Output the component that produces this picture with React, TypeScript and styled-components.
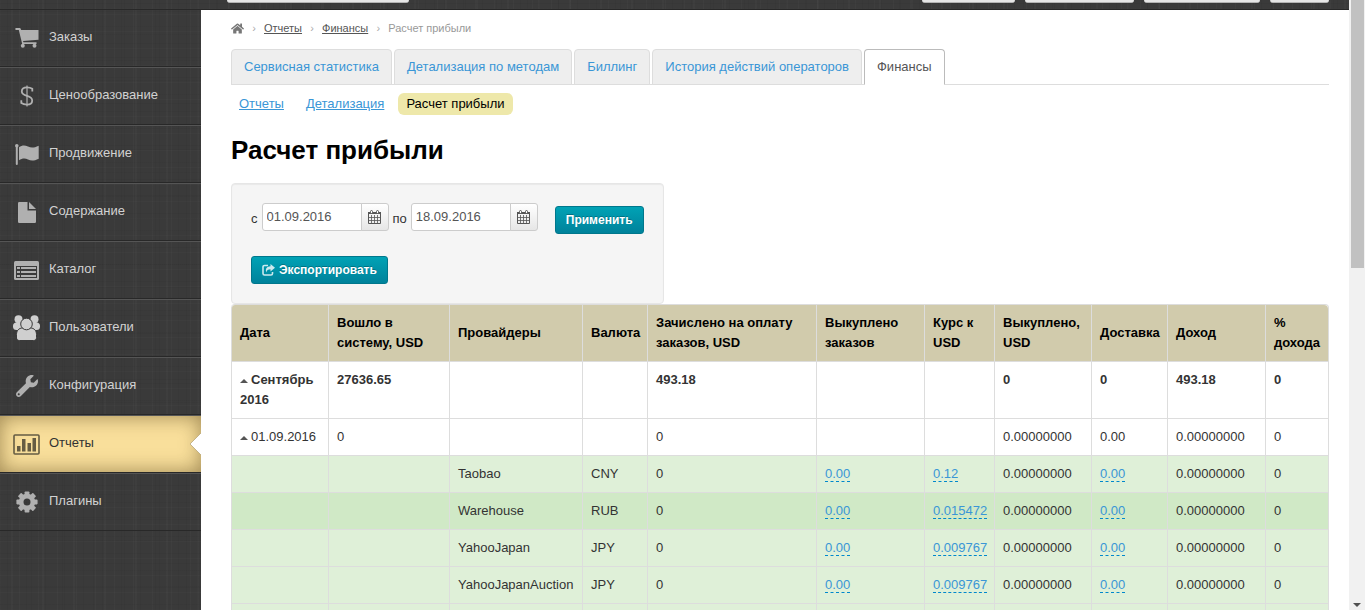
import React from 'react';
import styled, { createGlobalStyle, css } from 'styled-components';
import { FaWrench, FaHome } from 'react-icons/fa';

const GlobalStyle = createGlobalStyle`
  *, *::before, *::after { box-sizing: border-box; }
  body {
    margin: 0;
    background: #fff;
    color: #333;
    font: 13px/20px "Liberation Sans", Arial, sans-serif;
  }
  button, input { font: inherit; }
  a { color: #3a96d6; }
`;

const linen = css`
  background-color: #3a3a3a;
  background-image:
    repeating-linear-gradient(90deg, rgba(255, 255, 255, 0.02) 0 1px, transparent 1px 7px, rgba(0, 0, 0, 0.04) 7px 8px, transparent 8px 19px),
    repeating-linear-gradient(90deg, rgba(0, 0, 0, 0.04) 0 1px, transparent 1px 11px, rgba(255, 255, 255, 0.02) 11px 13px, transparent 13px 31px),
    repeating-linear-gradient(0deg, rgba(255, 255, 255, 0.015) 0 1px, transparent 1px 5px, rgba(0, 0, 0, 0.03) 5px 6px, transparent 6px 17px),
    repeating-linear-gradient(0deg, rgba(0, 0, 0, 0.03) 0 1px, transparent 1px 23px);
`;

const Shell = styled.div`
  display: flex;
  height: 100vh;
  overflow: hidden;
`;

const Page = styled.div`
  flex: 1;
  min-width: 0;
  display: flex;
  flex-direction: column;
`;

const TopBar = styled.header`
  ${linen}
  flex: none;
  display: flex;
  align-items: flex-start;
  gap: 10px;
  height: 10px;
  padding: 0 20px 0 227px;
  border-bottom: 1px solid #282828;
`;

const TopButton = styled.button<{ $width: number; $push?: boolean }>`
  width: ${p => p.$width}px;
  height: 3px;
  padding: 0;
  margin-right: ${p => (p.$push ? 'auto' : '0')};
  border: 0;
  border-bottom: 1px solid #b3b3b3;
  border-radius: 0 0 3px 3px;
  background: #e6e6e6;
`;

const Body = styled.div`
  flex: 1;
  min-height: 0;
  display: flex;
`;

const Sidebar = styled.nav`
  ${linen}
  flex: none;
  width: 201px;
`;

const Menu = styled.ul`
  margin: 0;
  padding: 0;
  list-style: none;
`;

const MenuItem = styled.li`
  position: relative;
  border-top: 1px solid #555;
  border-bottom: 1px solid #282828;
  &:first-child { border-top: 0; }
`;

const MenuLink = styled.a<{ $active?: boolean }>`
  display: flex;
  align-items: center;
  gap: 9px;
  height: 56px;
  padding: 0 13px;
  color: ${p => (p.$active ? '#333' : '#d2d2d2')};
  text-decoration: none;
  ${p => p.$active && css`
    background: #f9df9b;
    box-shadow: inset 0 0 20px rgba(80, 60, 20, 0.55);
  `}
`;

const MenuIcon = styled.span<{ $active?: boolean }>`
  display: flex;
  align-items: center;
  justify-content: center;
  width: 27px;
  height: 28px;
  color: ${p => (p.$active ? '#655c43' : '#b0b0b0')};
`;

const MenuLabel = styled.span`
  padding-bottom: 2px;
`;

const Notch = styled.svg`
  position: absolute;
  right: 0;
  top: 17px;
`;

const Content = styled.main`
  flex: 1;
  min-width: 0;
  overflow: hidden;
  padding: 8px 20px 0 30px;
`;

const Crumbs = styled.nav`
  display: flex;
  align-items: center;
  height: 20px;
  font-size: 11px;
  color: #999;
  a { color: #555; }
`;

const HomeLink = styled.a`
  display: flex;
  && { color: #777; }
`;

const Separator = styled.span`
  width: 20px;
  text-align: center;
  color: #aaa;
`;

const Tabs = styled.nav`
  display: flex;
  gap: 2px;
  margin-top: 11px;
  border-bottom: 1px solid #ddd;
`;

const Tab = styled.a<{ $active?: boolean }>`
  margin-bottom: -1px;
  padding: 7px 12px;
  border: 1px solid #ddd;
  border-radius: 4px 4px 0 0;
  background: #eee;
  text-decoration: none;
  white-space: nowrap;
  ${p => p.$active && css`
    color: #555;
    background: #fff;
    border-color: #bbb #bbb #fff;
  `}
`;

const Pills = styled.nav`
  display: flex;
  gap: 6px;
  margin-top: 8px;
`;

const Pill = styled.a<{ $active?: boolean }>`
  padding: 1px 8px;
  border-radius: 6px;
  ${p => p.$active && css`
    color: #000;
    background: #eee8aa;
    text-decoration: none;
  `}
`;

const Title = styled.h1`
  margin: 15px 0 13px;
  font-size: 26px;
  line-height: 40px;
  color: #000;
`;

const Filter = styled.form`
  display: flex;
  flex-direction: column;
  align-items: flex-start;
  gap: 22px;
  width: fit-content;
  padding: 19px;
  border: 1px solid #e6e6e6;
  border-radius: 4px;
  background: #f5f5f5;
  box-shadow: inset 0 1px 1px rgba(0, 0, 0, 0.05);
`;

const FilterRow = styled.div`
  display: flex;
  align-items: flex-start;
  gap: 4px;
  height: 31px;
`;

const FieldLabel = styled.label`
  padding-top: 6px;
`;

const DateGroup = styled.div`
  display: flex;
`;

const DateInput = styled.input`
  width: 100px;
  height: 28px;
  padding: 0 4px 2px;
  border: 1px solid #ccc;
  border-radius: 3px 0 0 3px;
  background: #fff;
  color: #555;
`;

const DateButton = styled.button`
  display: flex;
  align-items: center;
  justify-content: center;
  width: 28px;
  height: 28px;
  margin-left: -1px;
  padding: 0;
  border: 1px solid #ccc;
  border-radius: 0 3px 3px 0;
  background: linear-gradient(#fff, #e6e6e6);
  color: #555;
`;

const Button = styled.button`
  display: flex;
  align-items: center;
  gap: 4px;
  height: 28px;
  padding: 0 10px;
  border: 1px solid #00778c;
  border-radius: 3px;
  background: linear-gradient(#00a2b5, #00829b);
  color: #fff;
  font-size: 12px;
  font-weight: bold;
  text-shadow: 0 -1px 0 rgba(0, 0, 0, 0.25);
`;

const ApplySlot = styled.div`
  padding: 3px 0 0 13px;
`;

const Table = styled.table`
  width: 100%;
  table-layout: fixed;
  border: 1px solid #ddd;
  border-left: 0;
  border-radius: 4px;
  border-collapse: separate;
  border-spacing: 0;
`;

const HeadCell = styled.th`
  padding: 8px;
  border-left: 1px solid #ddd;
  background: #d1cbac;
  color: #000;
  text-align: left;
  vertical-align: middle;
  &:first-child { border-top-left-radius: 4px; }
  &:last-child { border-top-right-radius: 4px; }
`;

type Tone = 'plain' | 'green' | 'deep';
const tones: Record<Tone, string> = { plain: '#fff', green: '#dff0d8', deep: '#d0e9c6' };

const Row = styled.tr<{ $tone: Tone; $bold?: boolean }>`
  background: ${p => tones[p.$tone]};
  font-weight: ${p => (p.$bold ? 'bold' : 'normal')};
`;

const Cell = styled.td`
  height: 37px;
  padding: 8px;
  border-top: 1px solid #ddd;
  border-left: 1px solid #ddd;
  vertical-align: top;
`;

const EditLink = styled.a`
  border-bottom: 1px dashed #08c;
  text-decoration: none;
`;

const Caret = styled.span`
  display: inline-block;
  margin-right: 3px;
  border: 4px solid transparent;
  border-top-width: 0;
  border-bottom-color: #555;
  vertical-align: middle;
`;

const Rail = styled.div`
  flex: none;
  display: flex;
  flex-direction: column;
  justify-content: space-between;
  align-items: center;
  width: 16px;
  background: #f1f1f1;
`;

const Thumb = styled.div`
  width: 13px;
  height: 44%;
  margin-left: 1px;
  background: #c1c1c1;
`;

const CartIcon = () => (
  <svg width="24" height="20" viewBox="0 0 24 20" fill="currentColor">
    <path d="M1.200 0h4l1 2H23.500v9.800L8 13l.5 1.300H21.500V16H7.200L3.800 2H1.200a1 1 0 0 1 0-2z" />
    <circle cx="7.800" cy="17.700" r="2" />
    <circle cx="19.500" cy="17.700" r="2" />
  </svg>
);

const DollarIcon = () => (
  <svg width="14" height="22" viewBox="0 0 14 22" fill="none" stroke="currentColor">
    <path d="M7 .5v21" strokeWidth="1.200" />
    <path d="M12.300 6.500V3.800C11 2.900 9 2.400 7 2.400 3.800 2.400 1.800 4 1.800 6.400c0 2.700 2.200 3.500 5.200 4.400s5.200 1.900 5.200 4.600c0 2.600-2.200 4.200-5.200 4.200-2.200 0-4.300-.6-5.700-1.600v-2.700" strokeWidth="1.800" />
  </svg>
);

const FlagIcon = () => (
  <svg width="24" height="21" viewBox="0 0 24 21" fill="currentColor">
    <circle cx="1.800" cy="1.800" r="1.800" />
    <rect x="0.800" y="2" width="2" height="19" rx="1" />
    <path d="M4 3.200C7 1 10 1 13 2.500s6 1.500 10.700-.8v13C19 17 16 17 13 15.400s-6-1.200-9 .8z" />
  </svg>
);

const FileIcon = () => (
  <svg width="18" height="21" viewBox="0 0 18 21" fill="currentColor">
    <path d="M1.200 0H9.500v8.500H18v11.300a1.200 1.200 0 0 1-1.200 1.200H1.200A1.200 1.200 0 0 1 0 19.800V1.200A1.200 1.200 0 0 1 1.200 0z" />
    <path d="M11 0l7 7h-7z" />
  </svg>
);

const ListIcon = () => (
  <svg width="25" height="19" viewBox="0 0 25 19">
    <rect width="25" height="19" rx="1.500" fill="currentColor" />
    <rect x="2" y="5" width="21" height="12" fill="#3a3a3a" />
    <path d="M3 6h3v2H3zM7 6h15v2H7zM3 10h3v2H3zM7 10h15v2H7zM3 14h3v2H3zM7 14h15v2H7z" fill="currentColor" />
  </svg>
);

const UsersIcon = () => (
  <svg width="27" height="26" viewBox="0 0 27 26" fill="#cfcfcf">
    <circle cx="5.500" cy="4.200" r="4" />
    <circle cx="21.500" cy="4.200" r="4" />
    <rect x="0" y="7.500" width="10" height="7.500" rx="3.500" />
    <rect x="17" y="7.500" width="10" height="7.500" rx="3.500" />
    <g stroke="#3a3a3a">
      <path d="M3.500 25.500v-6c0-4 2.500-6.500 6-6.500h8c3.500 0 6 2.500 6 6.500v3c0 2-1 3-3 3h-14c-2 0-3-1-3-3z" />
      <circle cx="13.500" cy="9" r="5.800" />
    </g>
  </svg>
);

const ChartIcon = () => (
  <svg width="27" height="21" viewBox="0 0 27 21" fill="currentColor">
    <rect x="1" y="1" width="25" height="19" rx="1" fill="none" stroke="currentColor" strokeWidth="1.600" />
    <path d="M4 12h3.500v5.500H4zM9 5h3.500v12.500H9zM14.500 9H18v8.500h-3.500zM19.500 4H23v13.500h-3.500z" />
  </svg>
);

const GearIcon = () => (
  <svg width="22" height="22" viewBox="-11 -11 22 22" fill="currentColor">
    <mask id="gear-hole" maskUnits="userSpaceOnUse" x="-11" y="-11" width="22" height="22">
      <rect x="-11" y="-11" width="22" height="22" fill="#fff" />
      <circle r="3.500" fill="#000" />
    </mask>
    <g mask="url(#gear-hole)">
      {[0, 45, 90, 135].map(a => (
        <rect key={a} x="-2.400" y="-10.600" width="4.800" height="21.200" rx="0.800" transform={`rotate(${a})`} />
      ))}
      <circle r="8.200" />
    </g>
  </svg>
);

const CalendarIcon = () => (
  <svg width="13" height="14" viewBox="0 0 13 14" fill="none" stroke="currentColor">
    <path d="M0 3.500h13M0 2.500h13" />
    <path d="M.5 2v11.500h12V2" />
    <path d="M0 7.500h13M0 10.500h13M3.500 5v9M6.500 5v9M9.500 5v9" strokeOpacity="0.800" />
    <rect x="2.500" y="0.500" width="2" height="3" rx="1" fill="#fff" />
    <rect x="8.500" y="0.500" width="2" height="3" rx="1" fill="#fff" />
  </svg>
);

const ExportIcon = () => (
  <svg width="13" height="12" viewBox="0 0 13 12" opacity="0.800">
    <path d="M6 1.500H2.500a1.500 1.500 0 0 0-1.500 1.500v6.500A1.500 1.500 0 0 0 2.500 11h6.500a1.500 1.500 0 0 0 1.500-1.500V8" fill="none" stroke="#fff" strokeWidth="1.600" />
    <path d="M8.500 0L13 3.700 8.500 7.400V5.200C6 5.200 4.800 6 4.300 8.400 3 4.500 5 2.300 8.500 2.200z" fill="#fff" />
  </svg>
);

const menu: { label: string; icon: React.ReactNode; active?: boolean }[] = [
  { label: 'Заказы', icon: <CartIcon /> },
  { label: 'Ценообразование', icon: <DollarIcon /> },
  { label: 'Продвижение', icon: <FlagIcon /> },
  { label: 'Содержание', icon: <FileIcon /> },
  { label: 'Каталог', icon: <ListIcon /> },
  { label: 'Пользователи', icon: <UsersIcon /> },
  { label: 'Конфигурация', icon: <FaWrench size={22} /> },
  { label: 'Отчеты', icon: <ChartIcon />, active: true },
  { label: 'Плагины', icon: <GearIcon /> },
];

const tabs = ['Сервисная статистика', 'Детализация по методам', 'Биллинг', 'История действий операторов', 'Финансы'];
const pills = ['Отчеты', 'Детализация', 'Расчет прибыли'];

const columns: [string, number][] = [
  ['Дата', 97],
  ['Вошло в систему, USD', 121],
  ['Провайдеры', 133],
  ['Валюта', 65],
  ['Зачислено на оплату заказов, USD', 169],
  ['Выкуплено заказов', 108],
  ['Курс к USD', 70],
  ['Выкуплено, USD', 97],
  ['Доставка', 76],
  ['Доход', 98],
  ['% дохода', 63],
];

const providers: [string, string, string, Tone][] = [
  ['Taobao', 'CNY', '0.12', 'green'],
  ['Warehouse', 'RUB', '0.015472', 'deep'],
  ['YahooJapan', 'JPY', '0.009767', 'green'],
  ['YahooJapanAuction', 'JPY', '0.009767', 'green'],
];

const Edit = ({ children }: { children: React.ReactNode }) => <EditLink href="#">{children}</EditLink>;

const DateField = ({ id, label, value }: { id: string; label: string; value: string }) => (
  <>
    <FieldLabel htmlFor={id}>{label}</FieldLabel>
    <DateGroup>
      <DateInput id={id} type="text" defaultValue={value} />
      <DateButton type="button" aria-label="Календарь"><CalendarIcon /></DateButton>
    </DateGroup>
  </>
);

export default function App() {
  return (
    <Shell>
      <GlobalStyle />
      <Page>
        <TopBar>
          <TopButton $width={182} $push aria-label="Меню" />
          <TopButton $width={93} aria-label="Сайт" />
          <TopButton $width={109} aria-label="Помощь" />
          <TopButton $width={116} aria-label="Профиль" />
          <TopButton $width={59} aria-label="Выход" />
        </TopBar>
        <Body>
          <Sidebar>
            <Menu>
              {menu.map(m => (
                <MenuItem key={m.label}>
                  <MenuLink href="#" $active={m.active}>
                    <MenuIcon $active={m.active}>{m.icon}</MenuIcon>
                    <MenuLabel>{m.label}</MenuLabel>
                  </MenuLink>
                  {m.active && (
                    <Notch width="11" height="22" viewBox="0 0 11 22">
                      <path d="M11 0L0 11l11 11z" fill="#fff" />
                      <path d="M11 0L0 11l11 11" fill="none" stroke="#b9a77a" strokeWidth="0.800" />
                    </Notch>
                  )}
                </MenuItem>
              ))}
            </Menu>
          </Sidebar>
          <Content>
            <Crumbs>
              <HomeLink href="#" aria-label="Главная"><FaHome size={13} /></HomeLink>
              <Separator>›</Separator>
              <a href="#">Отчеты</a>
              <Separator>›</Separator>
              <a href="#">Финансы</a>
              <Separator>›</Separator>
              <span>Расчет прибыли</span>
            </Crumbs>
            <Tabs>
              {tabs.map(t => <Tab key={t} href="#" $active={t === 'Финансы'}>{t}</Tab>)}
            </Tabs>
            <Pills>
              {pills.map(t => <Pill key={t} href="#" $active={t === 'Расчет прибыли'}>{t}</Pill>)}
            </Pills>
            <Title>Расчет прибыли</Title>
            <Filter>
              <FilterRow>
                <DateField id="from" label="с" value="01.09.2016" />
                <DateField id="to" label="по" value="18.09.2016" />
                <ApplySlot><Button type="button">Применить</Button></ApplySlot>
              </FilterRow>
              <Button type="button"><ExportIcon />Экспортировать</Button>
            </Filter>
            <Table>
              <colgroup>
                {columns.map(([name, width]) => <col key={name} width={width} />)}
              </colgroup>
              <thead>
                <tr>{columns.map(([name]) => <HeadCell key={name} scope="col">{name}</HeadCell>)}</tr>
              </thead>
              <tbody>
                <Row $tone="plain" $bold>
                  <Cell><Caret />Сентябрь 2016</Cell>
                  <Cell>27636.65</Cell>
                  <Cell /><Cell />
                  <Cell>493.18</Cell>
                  <Cell /><Cell />
                  <Cell>0</Cell>
                  <Cell>0</Cell>
                  <Cell>493.18</Cell>
                  <Cell>0</Cell>
                </Row>
                <Row $tone="plain">
                  <Cell><Caret />01.09.2016</Cell>
                  <Cell>0</Cell>
                  <Cell /><Cell />
                  <Cell>0</Cell>
                  <Cell /><Cell />
                  <Cell>0.00000000</Cell>
                  <Cell>0.00</Cell>
                  <Cell>0.00000000</Cell>
                  <Cell>0</Cell>
                </Row>
                {providers.map(([name, currency, rate, tone]) => (
                  <Row key={name} $tone={tone}>
                    <Cell /><Cell />
                    <Cell>{name}</Cell>
                    <Cell>{currency}</Cell>
                    <Cell>0</Cell>
                    <Cell><Edit>0.00</Edit></Cell>
                    <Cell><Edit>{rate}</Edit></Cell>
                    <Cell>0.00000000</Cell>
                    <Cell><Edit>0.00</Edit></Cell>
                    <Cell>0.00000000</Cell>
                    <Cell>0</Cell>
                  </Row>
                ))}
                <Row $tone="green">{columns.map(([name]) => <Cell key={name} />)}</Row>
              </tbody>
            </Table>
          </Content>
        </Body>
      </Page>
      <Rail aria-hidden="true">
        <Thumb />
        <svg width="8" height="8" viewBox="0 0 8 8"><path d="M0 1h8L4 5z" fill="#505050" /></svg>
      </Rail>
    </Shell>
  );
}
